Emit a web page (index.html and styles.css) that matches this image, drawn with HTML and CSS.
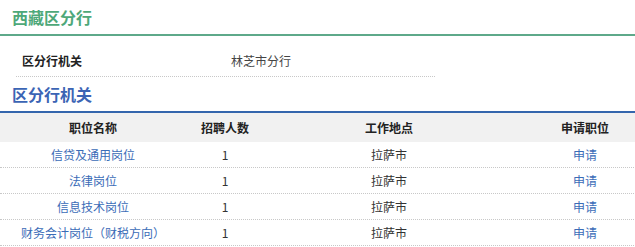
FILE: index.html
```html
<!DOCTYPE html>
<html lang="zh-CN">
<head>
<meta charset="utf-8">
<title>西藏区分行</title>
<link rel="stylesheet" href="styles.css">
</head>
<body>
<div class="page">
  <h2 class="branch-title">西藏区分行</h2>
  <div class="info-row">
    <span class="info-label">区分行机关</span>
    <span class="info-value">林芝市分行</span>
  </div>
  <h3 class="org-title">区分行机关</h3>
  <div class="jobs">
    <div class="jobs-grid">
      <div class="row head">
        <span>职位名称</span><span>招聘人数</span><span>工作地点</span><span>申请职位</span>
      </div>
      <div class="row">
        <a class="link">信贷及通用岗位</a><span>1</span><span>拉萨市</span><a class="link">申请</a>
      </div>
      <div class="row">
        <a class="link">法律岗位</a><span>1</span><span>拉萨市</span><a class="link">申请</a>
      </div>
      <div class="row">
        <a class="link">信息技术岗位</a><span>1</span><span>拉萨市</span><a class="link">申请</a>
      </div>
      <div class="row">
        <a class="link">财务会计岗位<span class="paren" lang="zh-TW">（</span>财税方向<span class="paren" lang="zh-TW">）</span></a><span>1</span><span>拉萨市</span><a class="link">申请</a>
      </div>
    </div>
  </div>
</div>
</body>
</html>
```

FILE: styles.css
```css
html, body {
  margin: 0;
  padding: 0;
  background: #fff;
}

.page {
  width: 635px;
  overflow: hidden;
  font-family: "Noto Sans CJK SC", "Microsoft YaHei", sans-serif;
  font-size: 12px;
  color: #333;
}

.branch-title {
  margin: 0;
  padding: 1px 0 0 12px;
  height: 33px;
  line-height: 33px;
  font-size: 16px;
  font-weight: bold;
  color: #4ea879;
  border-bottom: 2px solid #5ea98a;
}

.info-row {
  display: flex;
  margin-left: 16px;
  width: 419px;
  padding: 12px 0 3px 6px;
  box-sizing: border-box;
  height: 41px;
  line-height: 25px;
  border-bottom: 1px dotted #c8c8c8;
}

.info-label {
  width: 209px;
  font-weight: bold;
  color: #222;
}

.info-value {
  color: #444;
}

.org-title {
  margin: 0;
  padding-left: 12px;
  height: 34px;
  line-height: 34px;
  font-size: 16px;
  font-weight: bold;
  color: #3b64b4;
  border-bottom: 2px solid #3466ad;
}

.jobs {
  width: 635px;
  overflow: hidden;
}

.jobs-grid {
  width: 656px;
}

.row {
  display: grid;
  grid-template-columns: 186px 78px 250px 142px;
  height: 25px;
  line-height: 25px;
  text-align: center;
  border-bottom: 1px dotted #c8c8c8;
}

.row.head {
  height: 29px;
  line-height: 30px;
  background: #f1f1f1;
  font-weight: bold;
  color: #222;
  border-bottom: none;
}

.link {
  color: #3b6cb7;
  text-decoration: none;
}

/* centred full-width brackets */
.paren {
  font-family: "Noto Sans CJK TC", "Noto Sans CJK SC", sans-serif;
}
```
